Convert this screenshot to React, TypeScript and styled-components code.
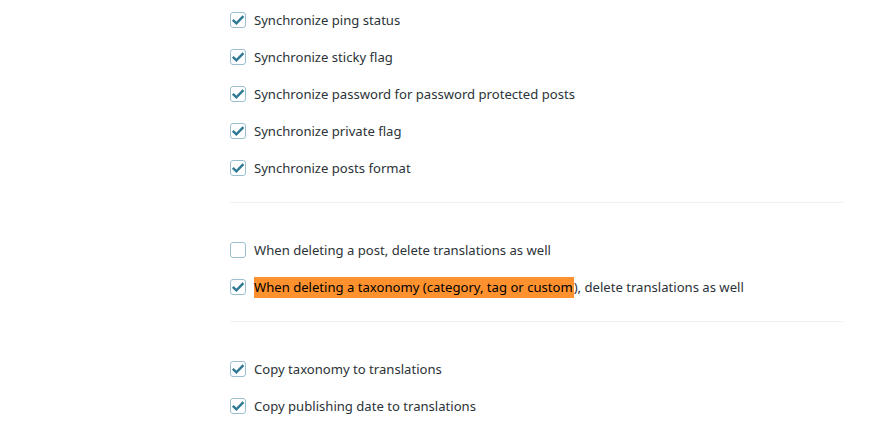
import React from "react";
import styled, { createGlobalStyle } from "styled-components";

const GlobalStyle = createGlobalStyle`
  body {
    margin: 0;
    background: #ffffff;
    font-family: "Noto Sans", "Open Sans", sans-serif;
  }
`;

const Page = styled.div`
  padding: 1px 0 0 230px;
  width: 613px;
`;

const Section = styled.div<{ $last?: boolean }>`
  padding-bottom: 16px;
  border-bottom: ${(p) => (p.$last ? "none" : "1px solid #f0f0f0")};

  & + & {
    padding-top: 28px;
  }
`;

const Row = styled.div`
  display: flex;
  align-items: center;
  height: 37px;
`;

const Box = styled.span`
  box-sizing: border-box;
  width: 16px;
  height: 16px;
  border: 1px solid #9bbfd0;
  border-radius: 3px;
  background: #fff;
  display: flex;
  align-items: center;
  justify-content: center;
  margin-right: 8px;
  flex-shrink: 0;
`;

const Label = styled.span`
  font-size: 13.1px;
  color: #2c3338;
  white-space: nowrap;
`;

const Mark = styled.span`
  background: #ff922e;
  color: #000;
  padding: 1px 1px 2px 0;
`;

type Option = { label: React.ReactNode; checked: boolean };

const sections: Option[][] = [
  [
    { label: "Synchronize ping status", checked: true },
    { label: "Synchronize sticky flag", checked: true },
    { label: "Synchronize password for password protected posts", checked: true },
    { label: "Synchronize private flag", checked: true },
    { label: "Synchronize posts format", checked: true },
  ],
  [
    { label: "When deleting a post, delete translations as well", checked: false },
    {
      label: (
        <>
          <Mark>When deleting a taxonomy (category, tag or custom</Mark>), delete translations as well
        </>
      ),
      checked: true,
    },
  ],
  [
    { label: "Copy taxonomy to translations", checked: true },
    { label: "Copy publishing date to translations", checked: true },
  ],
];

const App = () => {
  return (
    <>
      <GlobalStyle />
      <Page>
        {sections.map((options, i) => (
          <Section key={i} $last={i === sections.length - 1}>
            {options.map((opt, j) => (
              <Row key={j}>
                <Box>
                  {opt.checked && (
                    <svg width='14' height='14' viewBox='0 0 14 14'>
                      <path
                        d='M1.8 6.8 L5.4 10.4 L12.4 3.2'
                        fill='none'
                        stroke='#2d7893'
                        strokeWidth='2.4'
                      />
                    </svg>
                  )}
                </Box>
                <Label>{opt.label}</Label>
              </Row>
            ))}
          </Section>
        ))}
      </Page>
    </>
  );
};

export default App;
